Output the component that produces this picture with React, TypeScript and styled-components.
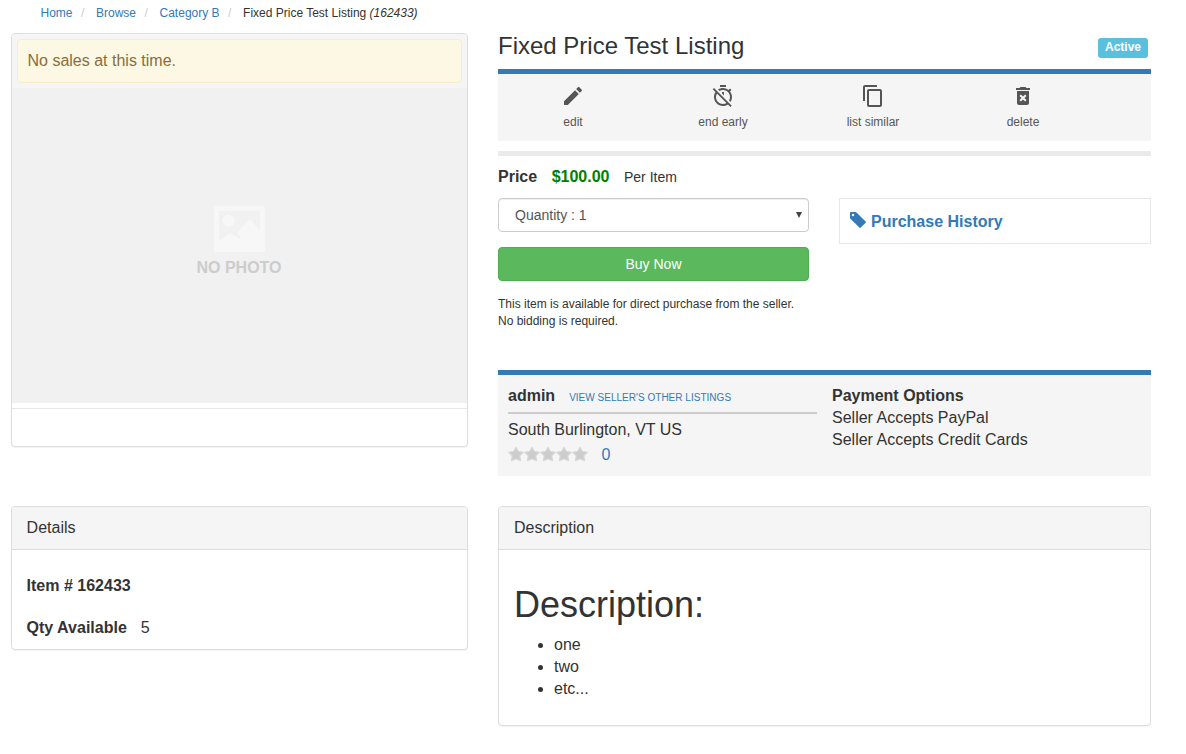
import styled, { createGlobalStyle } from 'styled-components'

const GlobalStyle = createGlobalStyle`
  * {
    box-sizing: border-box;
  }

  body {
    margin: 0;
    background: #fff;
    color: #333;
    font-family: 'Liberation Sans', Arial, sans-serif;
    font-size: 16px;
    line-height: 22px;
  }

  a {
    color: #337ab7;
    text-decoration: none;
  }
`

const Page = styled.div`
  width: 1186px;
  height: 754px;
  padding: 0 35px 0 11px;
  overflow: hidden;
`

const Breadcrumb = styled.ol`
  display: flex;
  height: 33px;
  margin: 0;
  padding: 5px 0 0 29.5px;
  list-style: none;
  font-size: 12px;
  line-height: 17px;
`

const Crumb = styled.li`
  & + &::before {
    content: '/';
    display: inline-block;
    width: 15px;
    padding-left: 8.5px;
    box-sizing: content-box;
    color: #ccc;
  }
`

const Columns = styled.div`
  display: grid;
  grid-template-columns: 457px 653px;
  column-gap: 30px;
  align-items: start;
`

const TopColumns = styled(Columns)`
  height: 473px;
`

const Panel = styled.section`
  border: 1px solid #ddd;
  border-radius: 4px;
  background: #fff;
  box-shadow: 0 1px 1px rgba(0, 0, 0, 0.05);
  overflow: hidden;
`

const PhotoPanel = styled(Panel)`
  height: 414px;
`

const AlertStrip = styled.div`
  height: 54px;
  padding: 5px;
  background: #f5f5f5;
`

const Alert = styled.div`
  height: 44px;
  padding: 10px 9.5px;
  border: 1px solid #faebcc;
  border-radius: 4px;
  background: #fcf8e3;
  color: #8a6d3b;
`

const Photo = styled.div`
  display: flex;
  flex-direction: column;
  align-items: center;
  height: 315px;
  padding: 118px 1px 0 0;
  background: #f1f1f1;
  color: #ccc;
  font-weight: bold;

  svg {
    margin-bottom: 5px;
  }
`

const PhotoFooter = styled.div`
  margin-top: 5px;
  border-top: 1px solid #e7e7e7;
`

const PanelHeading = styled.div`
  height: 43px;
  padding: 10px 15px;
  border-bottom: 1px solid #ddd;
  background: #f5f5f5;
`

const DetailsPanel = styled(Panel)`
  ${PanelHeading} {
    padding-left: 14.6px;
  }
`

const DetailsBody = styled.div`
  height: 99px;
  padding: 25px 14.6px 0;
`

const DetailRow = styled.div`
  margin-bottom: 20px;

  span {
    margin-left: 14px;
  }
`

const DescriptionBody = styled.div`
  height: 175px;
  padding: 35px 15px 0;

  h1 {
    margin: 0 0 9px;
    font-size: 36px;
    font-weight: normal;
    line-height: 40px;
  }

  ul {
    margin: 0;
    padding-left: 40px;
  }
`

const TitleRow = styled.div`
  display: flex;
  justify-content: space-between;
  height: 36px;
  padding-right: 3px;

  h3 {
    margin: 0;
    font-size: 24px;
    font-weight: normal;
    line-height: 26px;
  }
`

const Badge = styled.span`
  width: 50px;
  height: 20px;
  margin-top: 5px;
  border-radius: 3px;
  background: #5bc0de;
  color: #fff;
  font-size: 12px;
  font-weight: bold;
  line-height: 18px;
  text-align: center;
`

const Toolbar = styled.div`
  display: flex;
  height: 72px;
  border-top: 5px solid #337ab7;
  background: #f5f5f5;
`

const ToolButton = styled.a`
  display: flex;
  flex-direction: column;
  align-items: center;
  width: 150px;
  padding-top: 10px;
  color: #555;
  font-size: 12px;
  line-height: 17px;

  svg {
    margin-bottom: 6px;
    fill: #555;
  }
`

const Divider = styled.div`
  height: 5px;
  margin-top: 10px;
  background: #eaeaea;
`

const PriceRow = styled.div`
  display: flex;
  align-items: baseline;
  height: 42px;
  padding-top: 10px;
`

const Amount = styled.strong`
  margin: 0 14.5px;
  color: green;
`

const PerItem = styled.span`
  font-size: 14px;
`

const BuyArea = styled.div`
  display: grid;
  grid-template-columns: 311px 312px;
  column-gap: 30px;
  align-items: start;
  height: 172px;
`

const QuantitySelect = styled.div`
  display: flex;
  align-items: center;
  justify-content: space-between;
  height: 34px;
  padding: 0 6px 0 16px;
  border: 1px solid #ccc;
  border-radius: 4px;
  box-shadow: inset 0 1px 1px rgba(0, 0, 0, 0.075);
  color: #555;
  font-size: 14px;
`

const BuyButton = styled.button`
  display: block;
  width: 100%;
  height: 34px;
  margin: 15px 0;
  padding: 0;
  border: 1px solid #4cae4c;
  border-radius: 4px;
  background: #5cb85c;
  color: #fff;
  font: 14px 'Liberation Sans', Arial, sans-serif;
`

const Note = styled.p`
  margin: 0;
  font-size: 12px;
  line-height: 17px;
`

const HistoryLink = styled.a`
  display: flex;
  align-items: center;
  height: 46px;
  padding: 2px 0 0 10px;
  border: 1px solid #e7e7e7;
  font-weight: bold;

  svg {
    margin: -4px 5px 0 0;
  }
`

const SellerBox = styled.div`
  display: grid;
  grid-template-columns: 309px 1fr;
  column-gap: 15px;
  height: 106px;
  padding: 10px;
  border-top: 5px solid #337ab7;
  background: #f5f5f5;
`

const SellerHead = styled.div`
  height: 29px;
  margin-bottom: 5px;
  border-bottom: 2px solid #ccc;

  a {
    margin-left: 14px;
    font-size: 10px;
    letter-spacing: 0.02px;
  }
`

const Rating = styled.div`
  display: flex;
  align-items: center;
  height: 28px;

  svg {
    margin-top: -2px;
  }

  a {
    margin-left: 13.5px;
  }
`

const tools = [
  {
    label: 'edit',
    path: 'M3 17.25V21h3.75L17.81 9.94l-3.75-3.75L3 17.25zM20.71 7.04c.39-.39.39-1.02 0-1.41l-2.34-2.34c-.39-.39-1.02-.39-1.41 0l-1.83 1.83 3.75 3.75 1.83-1.83z',
  },
  {
    label: 'end early',
    path: 'M19.04 4.55l-1.42 1.42C16.07 4.74 14.12 4 12 4c-1.83 0-3.53.55-4.95 1.48l1.46 1.46C9.53 6.35 10.73 6 12 6c3.87 0 7 3.13 7 7 0 1.27-.35 2.47-.94 3.49l1.45 1.45C20.45 16.53 21 14.83 21 13c0-2.12-.74-4.07-1.97-5.61l1.42-1.42-1.41-1.42zM15 1H9v2h6V1zm-4 8.44l2 2V8h-2v1.44zM3.02 4L1.75 5.27 4.5 8.03C3.55 9.45 3 11.16 3 13c0 4.97 4.02 9 9 9 1.84 0 3.55-.55 4.98-1.5l2.5 2.5 1.27-1.27-7.71-7.71L3.02 4zM12 20c-3.87 0-7-3.13-7-7 0-1.28.35-2.48.95-3.52l9.56 9.56c-1.03.61-2.23.96-3.51.96z',
  },
  {
    label: 'list similar',
    path: 'M16 1H4c-1.1 0-2 .9-2 2v14h2V3h12V1zm3 4H8c-1.1 0-2 .9-2 2v14c0 1.1.9 2 2 2h11c1.1 0 2-.9 2-2V7c0-1.1-.9-2-2-2zm0 16H8V7h11v14z',
  },
  {
    label: 'delete',
    path: 'M6 19c0 1.1.9 2 2 2h8c1.1 0 2-.9 2-2V7H6v12zm2.46-7.12l1.41-1.41L12 12.59l2.12-2.12 1.41 1.41L13.41 14l2.12 2.12-1.41 1.41L12 15.41l-2.12 2.12-1.41-1.41L10.59 14l-2.13-2.12zM15.5 4l-1-1h-5l-1 1H5v2h14V4z',
  },
]

const PhotoIcon = () => (
  <svg width="51" height="46" viewBox="0 0 51 46">
    <rect width="51" height="46" rx="1.5" fill="#f7f7f7" />
    <path d="M5 4.7h41v20L36 13 23.3 26l3.4 6.7L16 27.5 5 34.5z" fill="#f1f1f1" />
    <circle cx="14.7" cy="14.7" r="6" fill="#f7f7f7" />
  </svg>
)

const TagIcon = () => (
  <svg width="16" height="16" viewBox="0 0 16 16">
    <path
      d="M0 .7Q0 0 .7 0H5.500q.6 0 1 .4l9.300 9.300q.4.4 0 .8l-5.300 5.300q-.4.4-.8 0L.4 6.700Q0 6.300 0 5.700zM3 1.800a1.200 1.200 0 1 0 0 2.400 1.200 1.200 0 0 0 0-2.400z"
      fill="#337ab7"
      fillRule="evenodd"
    />
  </svg>
)

const Star = () => (
  <svg width="16" height="16" viewBox="0 0 16 16">
    <path
      d="M8 1.200l2.300 4.300 4.900.800-3.500 3.500.9 4.900L8 12.800l-4.600 1.900.9-4.900L.800 6.300l4.900-.800z"
      fill="#cdcdcd"
      stroke="#d6d6d6"
      strokeWidth="1.200"
      strokeLinejoin="round"
    />
  </svg>
)

const App = () => {
  return (
    <>
      <GlobalStyle />
      <Page>
        <Breadcrumb>
          <Crumb>
            <a href="#">Home</a>
          </Crumb>
          <Crumb>
            <a href="#">Browse</a>
          </Crumb>
          <Crumb>
            <a href="#">Category B</a>
          </Crumb>
          <Crumb>
            Fixed Price Test Listing <em>(162433)</em>
          </Crumb>
        </Breadcrumb>

        <TopColumns>
          <PhotoPanel>
            <AlertStrip>
              <Alert>No sales at this time.</Alert>
            </AlertStrip>
            <Photo>
              <PhotoIcon />
              NO PHOTO
            </Photo>
            <PhotoFooter />
          </PhotoPanel>

          <div>
            <TitleRow>
              <h3>Fixed Price Test Listing</h3>
              <Badge>Active</Badge>
            </TitleRow>
            <Toolbar>
              {tools.map(({ label, path }) => (
                <ToolButton key={label} href="#">
                  <svg width="24" height="24" viewBox="0 0 24 24">
                    <path d={path} />
                  </svg>
                  {label}
                </ToolButton>
              ))}
            </Toolbar>
            <Divider />
            <PriceRow>
              <strong>Price</strong>
              <Amount>$100.00</Amount>
              <PerItem>Per Item</PerItem>
            </PriceRow>
            <BuyArea>
              <div>
                <QuantitySelect>
                  Quantity : 1
                  <svg width="6" height="6" viewBox="0 0 6 6">
                    <path d="M0 0h6L3 6z" fill="#444" />
                  </svg>
                </QuantitySelect>
                <BuyButton>Buy Now</BuyButton>
                <Note>
                  This item is available for direct purchase from the seller.
                  <br />
                  No bidding is required.
                </Note>
              </div>
              <HistoryLink href="#">
                <TagIcon />
                Purchase History
              </HistoryLink>
            </BuyArea>
            <SellerBox>
              <div>
                <SellerHead>
                  <strong>admin</strong>
                  <a href="#">VIEW SELLER'S OTHER LISTINGS</a>
                </SellerHead>
                <div>South Burlington, VT US</div>
                <Rating>
                  {[1, 2, 3, 4, 5].map((n) => (
                    <Star key={n} />
                  ))}
                  <a href="#">0</a>
                </Rating>
              </div>
              <div>
                <strong>Payment Options</strong>
                <div>Seller Accepts PayPal</div>
                <div>Seller Accepts Credit Cards</div>
              </div>
            </SellerBox>
          </div>
        </TopColumns>

        <Columns>
          <DetailsPanel>
            <PanelHeading>Details</PanelHeading>
            <DetailsBody>
              <DetailRow>
                <strong>Item # 162433</strong>
              </DetailRow>
              <DetailRow>
                <strong>Qty Available</strong>
                <span>5</span>
              </DetailRow>
            </DetailsBody>
          </DetailsPanel>
          <Panel>
            <PanelHeading>Description</PanelHeading>
            <DescriptionBody>
              <h1>Description:</h1>
              <ul>
                <li>one</li>
                <li>two</li>
                <li>etc...</li>
              </ul>
            </DescriptionBody>
          </Panel>
        </Columns>
      </Page>
    </>
  )
}

export default App
